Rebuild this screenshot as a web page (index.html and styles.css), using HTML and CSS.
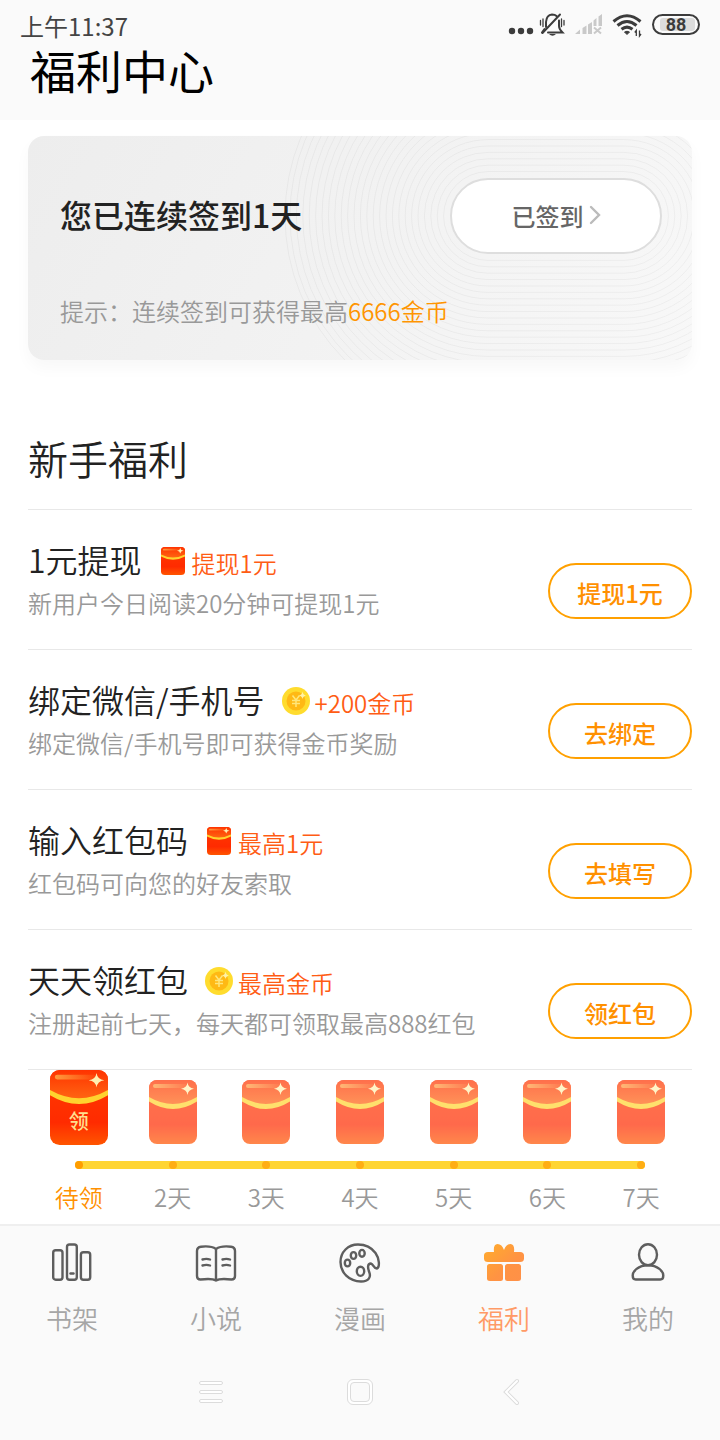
FILE: index.html
```html
<!DOCTYPE html>
<html lang="zh-CN">
<head>
<meta charset="utf-8">
<meta name="viewport" content="width=device-width, initial-scale=1">
<title>福利中心</title>
<link rel="stylesheet" href="styles.css">
</head>
<body>
<svg class="defs" aria-hidden="true">
  <defs>
    <linearGradient id="red" x1="0" y1="0" x2="0" y2="1"><stop offset="0" stop-color="#ff3a00"/><stop offset=".7" stop-color="#ff2b00"/><stop offset="1" stop-color="#ff5500"/></linearGradient>
    <linearGradient id="flap" x1="0" y1="0" x2="0" y2="1"><stop offset="0" stop-color="#ff3300"/><stop offset="1" stop-color="#ff6a14"/></linearGradient>
    <linearGradient id="shine" x1="0" y1="0" x2="1" y2="0"><stop offset="0" stop-color="#ff9a3c"/><stop offset="1" stop-color="#ff9a3c" stop-opacity="0"/></linearGradient>
    <linearGradient id="gift" x1="0" y1="0" x2="1" y2="1"><stop offset="0" stop-color="#ffad2c"/><stop offset=".6" stop-color="#ff9343"/><stop offset="1" stop-color="#ff9048"/></linearGradient>
    <clipPath id="packet-clip"><rect width="48" height="64" rx="8"/></clipPath>
    <symbol id="packet" viewBox="0 0 48 64" preserveAspectRatio="none">
      <g clip-path="url(#packet-clip)">
        <rect width="48" height="64" fill="url(#red)"/>
        <path d="M0 0H48V20Q24 34 0 20Z" fill="url(#flap)"/>
        <path d="M0 17Q24 31 48 17V21.500Q24 36.500 0 21.500Z" fill="#ffd32e"/>
        <rect x="4" y="4" width="36" height="4" rx="2" fill="url(#shine)"/>
        <path d="M38.500 2.500Q39.200 8 45 8.800Q39.200 9.600 38.500 15Q37.800 9.600 32 8.800Q37.800 8 38.500 2.500Z" fill="#fff0b0"/>
      </g>
    </symbol>
    <symbol id="coin" viewBox="0 0 28 28">
      <circle cx="14" cy="14" r="14" fill="#ffdc2e"/>
      <circle cx="14" cy="14" r="9.500" fill="#ffb914"/>
      <path d="M10.500 8.500L14 13L17.500 8.500M14 13V20M10 13.500H18M10 16.500H18" fill="none" stroke="#ffe67a" stroke-width="1.500"/>
      <path d="M20.500 4.500Q21 8 24 8.500Q21 9 20.500 12Q20 9 17 8.500Q20 8 20.500 4.500Z" fill="#fff3a8"/>
    </symbol>
  </defs>
</svg>

<header class="header">
  <div class="status">
    <span>上午11:37</span>
    <svg class="status-icons" viewBox="0 0 194 30" aria-hidden="true">
      <g fill="#3c3c3c"><circle cx="6" cy="19" r="3.200"/><circle cx="15" cy="19" r="3.200"/><circle cx="24" cy="19" r="3.200"/></g>
      <g fill="none" stroke="#3c3c3c" stroke-width="2" stroke-linecap="round">
        <path d="M40 15V10Q40.500 3 46 2.500Q49 2.500 50.500 4"/>
        <path d="M53 8.500V14Q53 17 56.500 20.500H42"/>
        <path d="M38.500 17L36 20.500"/>
        <path d="M54 2.500L36.500 21"/>
        <path d="M34.500 8.500V13M37 7V14.500M55.500 7V14.500M58 8.500V13" stroke-width="1.300"/>
      </g>
      <path d="M43 22H50Q46.500 25.500 43 22Z" fill="#3c3c3c"/>
      <g fill="#c9c9c9"><path d="M69 22L74 17.500V22ZM76.500 16L80.500 13.500V22H76.500ZM82 12.500L86 10V22H82ZM87.500 8.500L90.500 6V14H87.500ZM92.500 4.500L96 2V14H92.500Z"/></g>
      <path d="M88 15.500L95 21.500M95 15.500L88 21.500" stroke="#c9c9c9" stroke-width="2"/>
      <g fill="none" stroke="#3c3c3c" stroke-width="3"><path d="M107.500 9.500Q121 -2 134.500 9.500M111.500 13.500Q121 5.500 130.500 13.500M115.500 17.300Q121 13 126.500 17.300"/></g>
      <path d="M118.500 20Q121 18.500 123.500 20L121 22.500Z" fill="#3c3c3c" stroke="#3c3c3c"/>
      <path d="M130.300 24V18.500L128.800 20.500M133.500 18.500V24L135 22" fill="none" stroke="#3c3c3c" stroke-width="1.300"/>
      <rect x="147" y="3" width="46" height="19" rx="9.500" fill="none" stroke="#3c3c3c" stroke-width="2"/>
      <rect x="154" y="6" width="35" height="13" rx="3" fill="#dcdcdc"/>
      <text x="170" y="19" text-anchor="middle" class="battery">88</text>
    </svg>
  </div>
  <h1 class="title">福利中心</h1>
</header>

<main class="main">
  <section class="card">
    <svg class="rings" viewBox="-528 -80 664 224" preserveAspectRatio="xMaxYMid slice" aria-hidden="true">
      <g fill="none" stroke="#000" stroke-opacity=".04">
        <rect x="-112.400" y="-44.400" width="224.800" height="88.800" rx="44.400"/>
        <rect x="-118.800" y="-50.800" width="237.600" height="101.600" rx="50.800"/>
        <rect x="-125.200" y="-57.200" width="250.400" height="114.400" rx="57.200"/>
        <rect x="-131.600" y="-63.600" width="263.200" height="127.200" rx="63.600"/>
        <rect x="-138" y="-70" width="276" height="140" rx="70"/>
        <rect x="-144.400" y="-76.400" width="288.800" height="152.800" rx="76.400"/>
        <rect x="-150.800" y="-82.800" width="301.600" height="165.600" rx="82.800"/>
        <rect x="-157.200" y="-89.200" width="314.400" height="178.400" rx="89.200"/>
        <rect x="-163.600" y="-95.600" width="327.200" height="191.200" rx="95.600"/>
        <rect x="-170" y="-102" width="340" height="204" rx="102"/>
        <rect x="-176.400" y="-108.400" width="352.800" height="216.800" rx="108.400"/>
        <rect x="-182.800" y="-114.800" width="365.600" height="229.600" rx="114.800"/>
        <rect x="-189.200" y="-121.200" width="378.400" height="242.400" rx="121.200"/>
        <rect x="-195.600" y="-127.600" width="391.200" height="255.200" rx="127.600"/>
        <rect x="-202" y="-134" width="404" height="268" rx="134"/>
        <rect x="-208.400" y="-140.400" width="416.800" height="280.800" rx="140.400"/>
        <rect x="-214.800" y="-146.800" width="429.600" height="293.600" rx="146.800"/>
        <rect x="-221.200" y="-153.200" width="442.400" height="306.400" rx="153.200"/>
        <rect x="-227.600" y="-159.600" width="455.200" height="319.200" rx="159.600"/>
        <rect x="-234" y="-166" width="468" height="332" rx="166"/>
        <rect x="-240.400" y="-172.400" width="480.800" height="344.800" rx="172.400"/>
        <rect x="-246.800" y="-178.800" width="493.600" height="357.600" rx="178.800"/>
        <rect x="-253.200" y="-185.200" width="506.400" height="370.400" rx="185.200"/>
        <rect x="-259.600" y="-191.600" width="519.200" height="383.200" rx="191.600"/>
        <rect x="-266" y="-198" width="532" height="396" rx="198"/>
        <rect x="-271" y="-203" width="542" height="406" rx="203"/>
      </g>
    </svg>
    <div class="card-top">
      <h2 class="streak">您已连续签到1天</h2>
      <button class="signed" type="button">已签到<svg class="chevron" viewBox="0 0 12 20" aria-hidden="true"><path d="M2 2L10 10L2 18" fill="none" stroke="#bbb" stroke-width="2.400" stroke-linecap="round"/></svg></button>
    </div>
    <p class="hint">提示：连续签到可获得最高<span class="gold">6666金币</span></p>
  </section>

  <section>
    <h2 class="section-title">新手福利</h2>
    <ul class="tasks">
      <li class="task">
        <div class="task-text">
          <h3 class="task-title">1元提现<span class="reward"><svg class="reward-icon" viewBox="0 0 28 28" aria-hidden="true"><use href="#packet" x="2" width="24" height="28"/></svg><span class="reward-text">提现1元</span></span></h3>
          <p class="task-desc">新用户今日阅读20分钟可提现1元</p>
        </div>
        <button class="action" type="button">提现1元</button>
      </li>
      <li class="task">
        <div class="task-text">
          <h3 class="task-title">绑定微信/手机号<span class="reward"><svg class="reward-icon" viewBox="0 0 28 28" aria-hidden="true"><use href="#coin"/></svg><span class="reward-text">+200金币</span></span></h3>
          <p class="task-desc">绑定微信/手机号即可获得金币奖励</p>
        </div>
        <button class="action" type="button">去绑定</button>
      </li>
      <li class="task">
        <div class="task-text">
          <h3 class="task-title">输入红包码<span class="reward"><svg class="reward-icon" viewBox="0 0 28 28" aria-hidden="true"><use href="#packet" x="2" width="24" height="28"/></svg><span class="reward-text">最高1元</span></span></h3>
          <p class="task-desc">红包码可向您的好友索取</p>
        </div>
        <button class="action" type="button">去填写</button>
      </li>
      <li class="task">
        <div class="task-text">
          <h3 class="task-title">天天领红包<span class="reward"><svg class="reward-icon" viewBox="0 0 28 28" aria-hidden="true"><use href="#coin"/></svg><span class="reward-text">最高金币</span></span></h3>
          <p class="task-desc">注册起前七天，每天都可领取最高888红包</p>
        </div>
        <button class="action" type="button">领红包</button>
      </li>
    </ul>
    <ol class="days">
      <li class="day day-active"><div class="slot"><div class="packet-open"><svg class="packet-large" aria-hidden="true"><use href="#packet"/></svg><span class="claim">领</span></div></div><div class="track"><i class="dot"></i></div><span class="day-label">待领</span></li>
      <li class="day"><div class="slot"><svg class="packet" aria-hidden="true"><use href="#packet"/></svg></div><div class="track"><i class="dot"></i></div><span class="day-label">2天</span></li>
      <li class="day"><div class="slot"><svg class="packet" aria-hidden="true"><use href="#packet"/></svg></div><div class="track"><i class="dot"></i></div><span class="day-label">3天</span></li>
      <li class="day"><div class="slot"><svg class="packet" aria-hidden="true"><use href="#packet"/></svg></div><div class="track"><i class="dot"></i></div><span class="day-label">4天</span></li>
      <li class="day"><div class="slot"><svg class="packet" aria-hidden="true"><use href="#packet"/></svg></div><div class="track"><i class="dot"></i></div><span class="day-label">5天</span></li>
      <li class="day"><div class="slot"><svg class="packet" aria-hidden="true"><use href="#packet"/></svg></div><div class="track"><i class="dot"></i></div><span class="day-label">6天</span></li>
      <li class="day"><div class="slot"><svg class="packet" aria-hidden="true"><use href="#packet"/></svg></div><div class="track"><i class="dot"></i></div><span class="day-label">7天</span></li>
    </ol>
  </section>
</main>

<footer class="footer">
  <nav class="tabs">
    <a class="tab" href="#shelf"><svg class="tab-icon" viewBox="0 0 44 44" aria-hidden="true"><g fill="none" stroke="#5e5e5e" stroke-width="2.400"><rect x="3.200" y="8.200" width="9.300" height="29.500" rx="2.500"/><rect x="17" y="2.500" width="9.800" height="35.200" rx="2.500"/><rect x="30.900" y="10.200" width="9.300" height="27.500" rx="2.500"/><path d="M20.500 31.500H23.500" stroke-linecap="round"/></g></svg>书架</a>
    <a class="tab" href="#novel"><svg class="tab-icon" viewBox="0 0 44 44" aria-hidden="true"><g fill="none" stroke="#5e5e5e" stroke-width="2.400" stroke-linecap="round" stroke-linejoin="round"><path d="M22 7Q17 3.500 7 4.700Q3 5.200 3 9V34Q3 37.500 6.500 37.500Q18 36 22 38.500Q26 36 37.500 37.500Q41 37.500 41 34V9Q41 5.200 37 4.700Q27 3.500 22 7V38.500"/><path d="M8.500 17.500Q12.500 16.200 16 17.500M8.500 23.500Q12.500 22.200 16 23.500M28.500 17.500Q32.500 16.200 36 17.500M28.500 23.500Q32.500 22.200 36 23.500"/></g></svg>小说</a>
    <a class="tab" href="#comic"><svg class="tab-icon" viewBox="0 0 44 44" aria-hidden="true"><g fill="none" stroke="#5e5e5e" stroke-width="2.400"><path d="M20 2.500C10 2.500 2.500 10 2.500 20C2.500 30.500 11 39.500 23 39.500C31 39.500 33.200 35 31.200 30C29.500 25.500 29.500 21.500 32.800 21.500C35.500 22 35.500 26.500 38.800 26.500C42 25.500 41.500 16.500 37.500 11C33.500 5.500 27 2.500 20 2.500Z" stroke-linejoin="round"/><ellipse cx="9.500" cy="21" rx="2.700" ry="3.400"/><ellipse cx="15.500" cy="13.500" rx="2.700" ry="3.400"/><ellipse cx="24" cy="11.300" rx="2.700" ry="3.400"/><ellipse cx="22.500" cy="29.300" rx="3.700" ry="4.600"/></g></svg>漫画</a>
    <a class="tab tab-active" href="#welfare" aria-current="page"><svg class="tab-icon" viewBox="0 0 44 44" aria-hidden="true"><path fill="url(#gift)" d="M6 10H12Q11 2.500 15.500 2Q20 2 22 8Q24 2 28.500 2Q33 2.500 32 10H38Q42 10 42 13.500V16.500Q42 20 38 20H6Q2 20 2 16.500V13.500Q2 10 6 10ZM7.500 22H18.500Q21 22 21 24.500V36.500Q21 39 18.500 39H8Q5 39 5 36.500V24.500Q5 22 7.500 22ZM25.500 22H36.500Q39 22 39 24.500V36.500Q39 39 36 39H25.500Q23 39 23 36.500V24.500Q23 22 25.500 22Z"/></svg>福利</a>
    <a class="tab" href="#me"><svg class="tab-icon" viewBox="0 0 44 44" aria-hidden="true"><g fill="none" stroke="#5e5e5e" stroke-width="2.400"><ellipse cx="22" cy="12.700" rx="9" ry="10.500"/><path d="M22 23.200C12 23.200 6.700 29.500 6.700 33.500Q6.700 37.500 9.700 37.500H34.300Q37.300 37.500 37.300 33.500C37.300 29.500 32 23.200 22 23.200Z"/></g></svg>我的</a>
  </nav>
  <div class="system">
    <button class="system-key" type="button" aria-label="菜单"><svg class="key-icon" viewBox="0 0 30 30"><g fill="#fff" stroke="#dcdcdc"><rect x="4.500" y="4.500" width="23" height="3" rx="1.500"/><rect x="4.500" y="13.500" width="23" height="3" rx="1.500"/><rect x="4.500" y="22.500" width="23" height="3" rx="1.500"/></g></svg></button>
    <button class="system-key" type="button" aria-label="主页"><svg class="key-icon" viewBox="0 0 30 30"><g stroke="#dcdcdc"><rect x="2.500" y="2.500" width="25" height="25" rx="5.500" fill="#fff"/><rect x="5.500" y="5.500" width="19" height="19" rx="3.500" fill="#fafafa"/></g></svg></button>
    <button class="system-key" type="button" aria-label="返回"><svg class="key-icon" viewBox="0 0 30 30"><g fill="none" stroke-linecap="round"><path d="M22 4L11 15L22 26" stroke="#dcdcdc" stroke-width="4"/><path d="M22 4L11 15L22 26" stroke="#fff" stroke-width="2"/></g></svg></button>
  </div>
</footer>
</body>
</html>
```

FILE: styles.css
```css
* {
  box-sizing: border-box;
}

body {
  margin: 0;
  min-height: 100vh;
  display: flex;
  flex-direction: column;
  background: #fff;
  color: #222;
  font-family: "Noto Sans CJK SC", sans-serif;
  font-weight: 350;
}

h1, h2, h3, p, ul, ol {
  margin: 0;
  padding: 0;
  font-weight: 350;
  list-style: none;
}

button {
  font-family: inherit;
  cursor: pointer;
}

.defs {
  position: absolute;
  width: 0;
  height: 0;
}

.header {
  min-height: 120px;
  background: #fafafa;
}

.status {
  display: flex;
  justify-content: space-between;
  align-items: flex-start;
  height: 46px;
  padding: 12px 20px 0;
  font-size: 24px;
  line-height: 28px;
  font-weight: 400;
  color: #444;
}

.status-icons {
  width: 194px;
  height: 30px;
}

.battery {
  font: bold 18px Roboto, sans-serif;
  fill: #3c3c3c;
}

.title {
  padding-left: 30px;
  font-size: 46px;
  line-height: 46px;
  font-weight: 400;
  color: #000;
}

.main {
  flex: 1;
  padding: 16px 28px 0;
}

.card {
  position: relative;
  min-height: 224px;
  padding: 42px 30px 0 32px;
  border-radius: 16px;
  background: linear-gradient(120deg, #ededed, #f2f2f2 50%, #f8f8f8);
  box-shadow: 0 8px 16px rgba(0, 0, 0, .03);
  overflow: hidden;
}

.rings {
  position: absolute;
  inset: 0;
  width: 100%;
  height: 100%;
}

.card-top {
  position: relative;
  display: flex;
  justify-content: space-between;
  align-items: center;
}

.streak {
  padding-bottom: 4px;
  font-size: 32px;
  font-weight: 500;
}

.signed {
  display: flex;
  justify-content: center;
  align-items: center;
  gap: 5px;
  width: 212px;
  height: 76px;
  padding: 0 0 2px;
  border: 2px solid #dedede;
  border-radius: 38px;
  background: #fff;
  color: #666;
  font-size: 24px;
  font-weight: 500;
}

.chevron {
  width: 12px;
  height: 20px;
}

.hint {
  position: relative;
  margin-top: 37px;
  font-size: 24px;
  line-height: 40px;
  color: #999;
}

.gold {
  color: #ff9500;
}

.section-title {
  padding: 68px 0 21px;
  font-size: 40px;
  line-height: 60px;
}

.task {
  display: flex;
  justify-content: space-between;
  align-items: flex-start;
  height: 140px;
  padding-top: 27px;
  border-top: 1px solid #e8e8e8;
}

.tasks {
  border-bottom: 1px solid #e8e8e8;
}

.task-title {
  display: flex;
  font-size: 32px;
  line-height: 44px;
}

.reward {
  display: flex;
  align-items: center;
  gap: 5px;
  margin-left: 17px;
  font-size: 24px;
  line-height: 36px;
  color: #ff5c14;
}

.reward-icon {
  width: 28px;
  height: 32px;
  padding-top: 4px;
}

.reward-text {
  padding-top: 8px;
}

.task-desc {
  padding-top: 2px;
  font-size: 24px;
  line-height: 40px;
  color: #999;
}

.action {
  width: 144px;
  height: 56px;
  margin-top: 26px;
  padding: 2px 0 0;
  border: 2px solid #ffa000;
  border-radius: 28px;
  background: #fff;
  color: #ff9000;
  font-size: 24px;
  font-weight: 500;
}

.days {
  display: grid;
  grid-template-columns: repeat(7, 1fr);
  padding: 0 4px;
}

.day {
  text-align: center;
  font-size: 24px;
  color: #999;
}

.slot {
  display: flex;
  justify-content: center;
  align-items: flex-end;
  height: 75px;
}

.packet {
  width: 48px;
  height: 64px;
  margin-bottom: 1px;
  opacity: .7;
}

.packet-open {
  display: grid;
  place-items: center;
}

.packet-large {
  grid-area: 1 / 1;
  width: 58px;
  height: 75px;
}

.claim {
  grid-area: 1 / 1;
  padding-top: 26px;
  font-size: 20px;
  line-height: 24px;
  font-weight: 500;
  color: #ffdf8e;
}

.track {
  display: flex;
  justify-content: center;
  height: 8px;
  margin: 16px 0 8px;
  background: #ffd533;
}

.day:first-child .track {
  justify-content: flex-start;
  margin-left: calc(50% - 4px);
  border-radius: 4px 0 0 4px;
}

.day:last-child .track {
  justify-content: flex-end;
  margin-right: calc(50% - 4px);
  border-radius: 0 4px 4px 0;
}

.dot {
  width: 8px;
  height: 8px;
  border-radius: 4px;
  background: #ffae14;
}

.day-active .dot {
  background: #ff9d00;
}

.day-label {
  display: block;
  line-height: 40px;
}

.day-active .day-label {
  color: #ff9000;
}

.footer {
  height: 216px;
  border-top: 2px solid #efefef;
  background: #fafafa;
}

.tabs {
  display: grid;
  grid-template-columns: repeat(5, 1fr);
  height: 119px;
  padding-top: 16px;
}

.tab {
  display: flex;
  flex-direction: column;
  align-items: center;
  gap: 14px;
  font-size: 26px;
  line-height: 36px;
  color: #a6a6a6;
  text-decoration: none;
}

.tab-active {
  color: #ff9a66;
}

.tab-icon {
  width: 44px;
  height: 44px;
}

.system {
  display: flex;
  justify-content: center;
  gap: 120px;
  padding-top: 32px;
}

.system-key {
  padding: 0;
  border: 0;
  background: none;
}

.key-icon {
  display: block;
  width: 30px;
  height: 30px;
}
```
